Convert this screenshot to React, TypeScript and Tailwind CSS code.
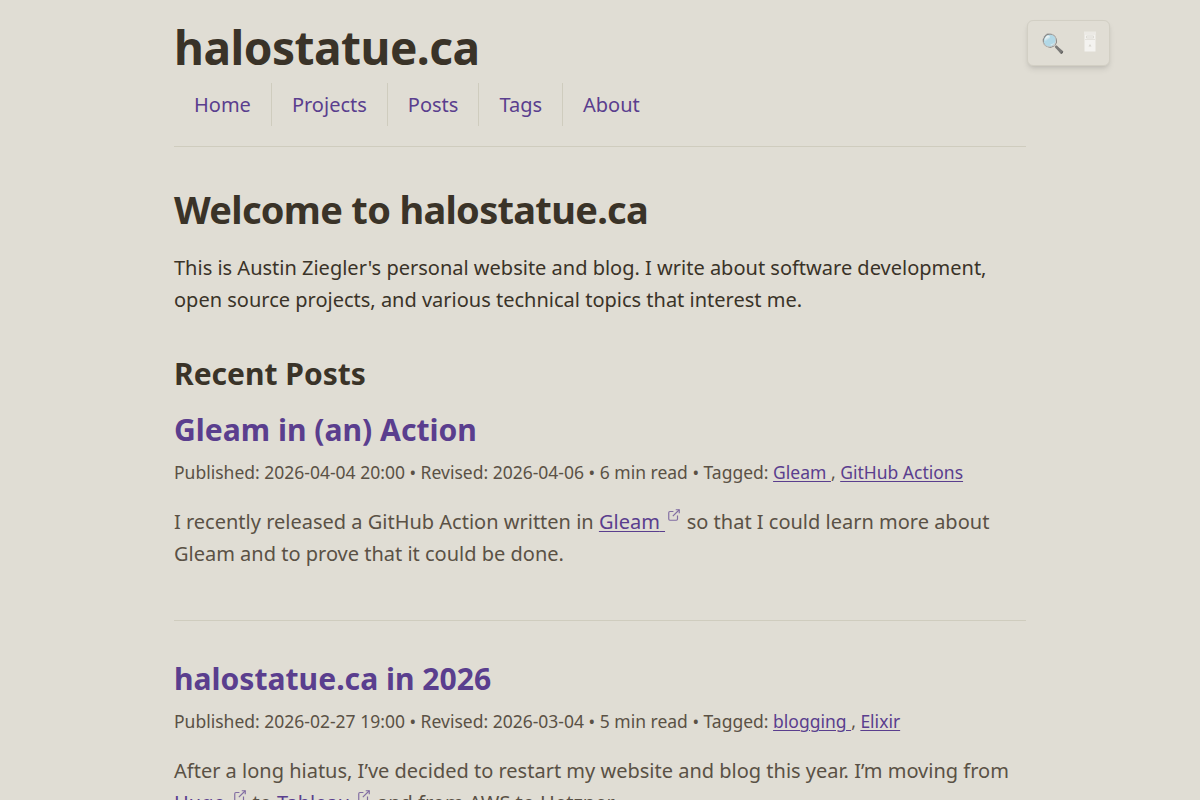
import type { ReactNode } from 'react';

const navItems = ['Home', 'Projects', 'Posts', 'Tags', 'About'];

function ThemeIcon() {
  return (
    <svg className="w-[12px] h-[21px]" viewBox="0 0 12 21" fill="none">
      <path d="M0 .5h12v3H0z" fill="#eceae5" />
      <path d="M.5 3.500h11v17H.5z" fill="#f4f3f0" />
      <path d="M2.500 5h7v2h-7z" stroke="#dddbd4" />
      <path d="M1 8.500h10" stroke="#e4e2dc" />
      <path d="M6 13l1.500 2.500h-3z" fill="#d8d6ce" />
    </svg>
  );
}

function ExternalLink({ children }: { children: ReactNode }) {
  return (
    <a href="#" className="text-[#5a3e8e]">
      <span className="underline underline-offset-[2px] decoration-1 whitespace-pre">{children} </span>
      <svg
        className="inline-block w-[14px] h-[14px] ml-[2px] mr-[0.500px] align-[7px] opacity-70"
        viewBox="0 0 24 24"
        fill="none"
        stroke="currentColor"
        strokeWidth="2"
      >
        <path d="M18 13v6a2 2 0 0 1-2 2H5a2 2 0 0 1-2-2V8a2 2 0 0 1 2-2h6" />
        <path d="M15 3h6v6" />
        <path d="M10 14L21 3" />
      </svg>
    </a>
  );
}

interface PostProps {
  title: string;
  published: string;
  revised: string;
  minutes: number;
  tags: string[];
  children: ReactNode;
}

function Post({ title, published, revised, minutes, tags, children }: PostProps) {
  return (
    <article className="h-[209px] border-b border-[#cfccbe] mb-10">
      <h3 className="text-[30.100px] leading-[36px] font-bold text-[#5a3e8e]">
        <a href="#">{title}</a>
      </h3>
      <p className="mt-[10px] text-[17.500px] leading-[28px] text-[#5a5145]">
        Published: {published} • Revised: {revised} • {minutes} min read • Tagged:{' '}
        {tags.map((tag, i) => (
          <span key={tag}>
            <a href="#" className="text-[#5a3e8e] underline underline-offset-[2px] decoration-1 whitespace-pre">
              {i < tags.length - 1 ? `${tag} ` : tag}
            </a>
            {i < tags.length - 1 && ', '}
          </span>
        ))}
      </p>
      <p className="mt-5 leading-8 text-[#5a5145]">{children}</p>
    </article>
  );
}

export default function App() {
  return (
    <div className="h-screen overflow-hidden bg-[#e0ddd4] text-[#3a3328] text-[20px] font-['Noto_Sans',sans-serif]">
      <div className="absolute top-5 left-[1027px] w-[83px] h-[46px] flex items-center justify-between pl-[13px] pr-[13px] rounded-md border border-[#d2cfc4] bg-[#e0ddd4] shadow-md">
        <button aria-label="Search" className="text-[19px] leading-6 opacity-80">
          🔍
        </button>
        <button aria-label="Theme" className="-mt-1">
          <ThemeIcon />
        </button>
      </div>

      <div className="w-[852px] mx-auto">
        <header className="pt-5 h-[147px] border-b border-[#cfccbe]">
          <div className="text-[46px] leading-[54px] font-bold tracking-[-0.5px]">halostatue.ca</div>
          <nav className="mt-[9px] flex">
            {navItems.map((item) => (
              <a
                key={item}
                href="#"
                className="px-5 h-[43px] leading-[43px] text-[#5a3e8e] border-r border-[#cfccbe] last:border-r-0"
              >
                {item}
              </a>
            ))}
          </nav>
        </header>

        <main>
          <h1 className="mt-[38px] text-[38px] leading-[48px] font-bold tracking-[-0.7px]">Welcome to halostatue.ca</h1>
          <p className="mt-[19px] leading-8">
            This is Austin Ziegler's personal website and blog. I write about software development, open source
            projects, and various technical topics that interest me.
          </p>

          <h2 className="mt-10 mb-5 text-[30px] leading-[36px] font-bold">Recent Posts</h2>

          <Post
            title="Gleam in (an) Action"
            published="2026-04-04 20:00"
            revised="2026-04-06"
            minutes={6}
            tags={['Gleam', 'GitHub Actions']}
          >
            I recently released a GitHub Action written in <ExternalLink>Gleam</ExternalLink> so that I could learn
            more about Gleam and to prove that it could be done.
          </Post>

          <Post
            title="halostatue.ca in 2026"
            published="2026-02-27 19:00"
            revised="2026-03-04"
            minutes={5}
            tags={['blogging', 'Elixir']}
          >
            After a long hiatus, I’ve decided to restart my website and blog this year. I’m moving from{' '}
            <ExternalLink>Hugo</ExternalLink> to <ExternalLink>Tableau</ExternalLink> and from AWS to Hetzner.
          </Post>
        </main>
      </div>
    </div>
  );
}
